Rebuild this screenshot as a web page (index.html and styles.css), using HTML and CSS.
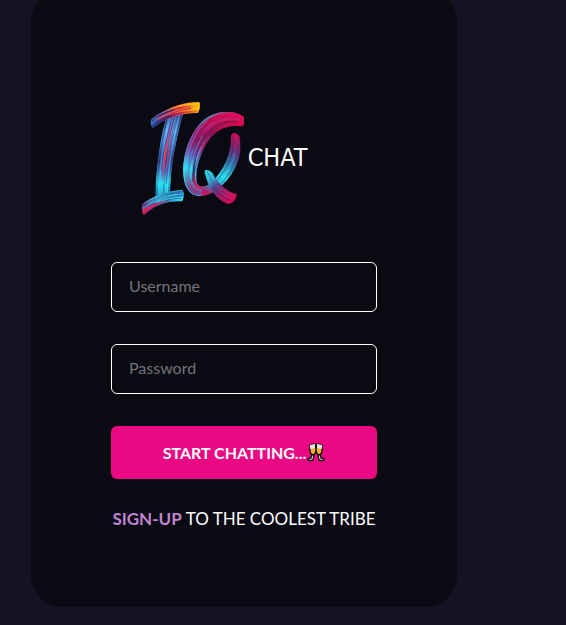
FILE: index.html
```html
<!DOCTYPE html>
<html lang="en">
<head>
<meta charset="utf-8">
<meta name="viewport" content="width=device-width, initial-scale=1">
<title>IQ Chat</title>
<link rel="stylesheet" href="styles.css">
</head>
<body>
<main class="page">
  <form class="card">
    <div class="brand">
      <svg class="logo" viewBox="0 0 570 405" role="img" aria-label="IQ Chat">
        <defs>
          <linearGradient id="bar" gradientUnits="userSpaceOnUse" x1="62" y1="105" x2="210" y2="50">
            <stop offset="0" stop-color="#2879c8"/><stop offset=".25" stop-color="#503079"/><stop offset=".5" stop-color="#e4314f"/><stop offset=".75" stop-color="#ff7a18"/><stop offset="1" stop-color="#ffc107"/>
          </linearGradient>
          <linearGradient id="barLight" gradientUnits="userSpaceOnUse" x1="62" y1="90" x2="210" y2="50">
            <stop offset="0" stop-color="#4c65b8"/><stop offset=".3" stop-color="#b17394"/><stop offset=".55" stop-color="#ff8b1e"/><stop offset="1" stop-color="#ffd019"/>
          </linearGradient>
          <linearGradient id="barDark" gradientUnits="userSpaceOnUse" x1="62" y1="105" x2="210" y2="50">
            <stop offset="0" stop-color="#2b2e83"/><stop offset=".35" stop-color="#30265f"/><stop offset=".65" stop-color="#c52a45"/><stop offset="1" stop-color="#f5a013"/>
          </linearGradient>
          <linearGradient id="stemBlue" gradientUnits="userSpaceOnUse" x1="0" y1="75" x2="0" y2="310">
            <stop offset="0" stop-color="#3957aa"/><stop offset=".2" stop-color="#5eb4ee"/><stop offset=".5" stop-color="#3366ad"/><stop offset=".7" stop-color="#4579cc"/><stop offset=".88" stop-color="#20e6f2"/><stop offset="1" stop-color="#2abbe0"/>
          </linearGradient>
          <linearGradient id="stemDark" gradientUnits="userSpaceOnUse" x1="0" y1="75" x2="0" y2="310">
            <stop offset="0" stop-color="#2a3274"/><stop offset=".35" stop-color="#3b6fc0"/><stop offset=".6" stop-color="#312c6c"/><stop offset=".85" stop-color="#25bcd6"/><stop offset="1" stop-color="#286ca8"/>
          </linearGradient>
          <linearGradient id="stemRed" gradientUnits="userSpaceOnUse" x1="0" y1="75" x2="0" y2="310">
            <stop offset="0" stop-color="#4a79cc"/><stop offset=".25" stop-color="#9a52a0"/><stop offset=".5" stop-color="#f33859"/><stop offset=".72" stop-color="#91519f"/><stop offset=".88" stop-color="#28dcee"/><stop offset="1" stop-color="#32b9dc"/>
          </linearGradient>
          <linearGradient id="foot" gradientUnits="userSpaceOnUse" x1="36" y1="360" x2="160" y2="315">
            <stop offset="0" stop-color="#b71b67"/><stop offset=".35" stop-color="#5b3b8d"/><stop offset=".65" stop-color="#299fd0"/><stop offset="1" stop-color="#36eaf5"/>
          </linearGradient>
          <linearGradient id="footBlue" gradientUnits="userSpaceOnUse" x1="36" y1="345" x2="160" y2="310">
            <stop offset="0" stop-color="#4d6db8"/><stop offset=".4" stop-color="#2bc7df"/><stop offset=".7" stop-color="#217da9"/><stop offset="1" stop-color="#3769bd"/>
          </linearGradient>
          <linearGradient id="footRed" gradientUnits="userSpaceOnUse" x1="36" y1="365" x2="130" y2="325">
            <stop offset="0" stop-color="#f01e4e"/><stop offset=".5" stop-color="#cc2b67"/><stop offset="1" stop-color="#277fc3"/>
          </linearGradient>
          <linearGradient id="ringOuter" gradientUnits="userSpaceOnUse" x1="320" y1="70" x2="180" y2="315">
            <stop offset="0" stop-color="#bd1769"/><stop offset=".18" stop-color="#3e9fc4"/><stop offset=".4" stop-color="#7b408f"/><stop offset=".6" stop-color="#6b6bce"/><stop offset=".8" stop-color="#2aeff7"/><stop offset="1" stop-color="#329ed4"/>
          </linearGradient>
          <linearGradient id="ringRed" gradientUnits="userSpaceOnUse" x1="330" y1="85" x2="195" y2="315">
            <stop offset="0" stop-color="#e60c56"/><stop offset=".3" stop-color="#aa0c57"/><stop offset=".5" stop-color="#8b1b69"/><stop offset=".62" stop-color="#6847a6"/><stop offset=".78" stop-color="#2fdff0"/><stop offset="1" stop-color="#8a2a83"/>
          </linearGradient>
          <linearGradient id="ringPurple" gradientUnits="userSpaceOnUse" x1="330" y1="85" x2="200" y2="315">
            <stop offset="0" stop-color="#bb1455"/><stop offset=".25" stop-color="#a63391"/><stop offset=".45" stop-color="#681b64"/><stop offset=".63" stop-color="#507fda"/><stop offset=".82" stop-color="#2896cd"/><stop offset="1" stop-color="#b11661"/>
          </linearGradient>
          <linearGradient id="ringInner" gradientUnits="userSpaceOnUse" x1="330" y1="105" x2="215" y2="300">
            <stop offset="0" stop-color="#d70850"/><stop offset=".3" stop-color="#7d184f"/><stop offset=".5" stop-color="#9f3f88"/><stop offset=".65" stop-color="#50a0e3"/><stop offset=".82" stop-color="#32437f"/><stop offset="1" stop-color="#e51555"/>
          </linearGradient>
          <linearGradient id="side" gradientUnits="userSpaceOnUse" x1="318" y1="130" x2="225" y2="305">
            <stop offset="0" stop-color="#d60e59"/><stop offset=".22" stop-color="#702b75"/><stop offset=".42" stop-color="#3268ac"/><stop offset=".67" stop-color="#29e6ef"/><stop offset=".86" stop-color="#3192ce"/><stop offset="1" stop-color="#c21763"/>
          </linearGradient>
          <linearGradient id="sideDark" gradientUnits="userSpaceOnUse" x1="318" y1="130" x2="225" y2="305">
            <stop offset="0" stop-color="#b10b55"/><stop offset=".28" stop-color="#552962"/><stop offset=".5" stop-color="#217490"/><stop offset=".8" stop-color="#2aa8cd"/><stop offset="1" stop-color="#7a2f85"/>
          </linearGradient>
          <linearGradient id="tail" gradientUnits="userSpaceOnUse" x1="225" y1="240" x2="305" y2="335">
            <stop offset="0" stop-color="#20e9ef"/><stop offset=".25" stop-color="#35b4d9"/><stop offset=".48" stop-color="#554089"/><stop offset=".7" stop-color="#9d1c65"/><stop offset="1" stop-color="#d90c59"/>
          </linearGradient>
          <clipPath id="barShape"><path d="M62 92Q65 80 130 50C160 38 190 35 208 37Q213 52 204 69C160 68 110 82 68 114Q60 105 62 92Z"/></clipPath>
          <clipPath id="stemShape"><path d="M108 84Q130 70 160 70C140 140 121 230 120 312L76 318C78 230 90 150 108 84Z"/></clipPath>
          <clipPath id="footShape"><path d="M36 345C60 320 110 302 157 300Q166 312 157 334C110 332 75 345 42 376Q35 370 36 345Z"/></clipPath>
          <clipPath id="ringShape"><path d="M341 80C315 60 275 62 245 75C190 100 158 180 160 250C162 300 185 320 215 318Q240 314 250 304L235 285C215 293 203 292 200 275C195 240 210 185 240 145C265 115 300 102 338 109Q345 98 341 80Z"/></clipPath>
          <clipPath id="sideShape"><path d="M303 136Q312 121 328 138C341 190 318 255 262 298Q240 316 214 318L218 291Q230 290 243 279C285 240 305 185 303 136Z"/></clipPath>
          <clipPath id="tailShape"><path d="M223 242Q236 236 248 250C262 280 290 305 321 313C318 328 310 340 295 342C260 330 234 296 223 242Z"/></clipPath>
        </defs>
        <g fill="none" stroke-linecap="round">
          <g clip-path="url(#stemShape)">
            <path fill="url(#stemBlue)" d="M60 60H170V325H60Z"/>
            <path stroke="url(#stemDark)" stroke-width="5" d="M111 84C94 155 82 235 80 315M133 74C114 145 103 230 100 315M155 72C135 145 119 232 116 315"/>
            <path stroke="url(#stemRed)" stroke-width="7" d="M130 74C111 145 98 230 94 315"/>
            <path stroke="url(#stemRed)" stroke-width="3" d="M139 74C121 145 108 230 105 315"/>
            <path stroke="#7bd3fa" stroke-opacity=".6" stroke-width="2" d="M121 80C103 150 91 220 89 285M149 76C128 150 114 230 111 310"/>
            <path stroke="#24336d" stroke-opacity=".7" stroke-width="2" d="M126 80C108 150 96 200 94 240M144 76C124 150 112 220 109 280"/>
          </g>
          <g clip-path="url(#barShape)">
            <path fill="url(#bar)" d="M50 25H220V125H50Z"/>
            <path stroke="url(#barDark)" stroke-width="5" d="M58 88C95 63 140 52 180 49M64 112C105 77 155 63 210 65"/>
            <path stroke="url(#barLight)" stroke-width="5" d="M60 90C95 62 150 43 210 40M72 91C115 67 155 57 207 55"/>
            <path stroke="#1f225c" stroke-width="3" stroke-opacity=".7" d="M67 92C85 75 110 66 129 61"/>
            <path stroke="#cb2351" stroke-width="4" d="M87 88C118 70 155 59 182 55"/>
          </g>
          <g clip-path="url(#footShape)">
            <path fill="url(#foot)" d="M25 290H175V385H25Z"/>
            <path stroke="url(#footBlue)" stroke-width="6" d="M34 345C70 320 115 308 162 304M37 355C75 331 118 320 162 316"/>
            <path stroke="url(#footRed)" stroke-width="7" d="M36 367C64 345 87 336 118 330"/>
            <path stroke="#173e7b" stroke-width="2" d="M36 348C72 326 115 313 158 309M60 346C90 332 120 326 155 324"/>
            <path stroke="#5ae7ff" stroke-width="2" d="M55 339C85 323 112 317 140 314M80 337Q115 324 158 320"/>
          </g>
          <g clip-path="url(#ringShape)">
            <path fill="url(#ringRed)" d="M145 50H350V330H145Z"/>
            <path stroke="url(#ringOuter)" stroke-width="10" d="M341 80C315 60 275 62 245 75C190 100 158 180 160 250C162 300 185 320 215 318"/>
            <path stroke="url(#ringRed)" stroke-width="8" d="M341 86C312 68 273 73 244 89C194 117 165 192 168 255C170 298 191 314 219 312"/>
            <path stroke="url(#ringPurple)" stroke-width="4" d="M341 91C309 77 271 83 243 103C198 134 173 204 176 260C178 297 197 309 223 306"/>
            <path stroke="url(#ringRed)" stroke-width="8" d="M341 97C306 85 269 94 242 117C202 151 180 216 184 265C187 295 203 303 227 300"/>
            <path stroke="url(#ringInner)" stroke-width="7" d="M341 102C303 94 267 104 241 131C206 168 188 228 192 270C195 294 209 298 231 294"/>
            <path stroke="url(#ringInner)" stroke-width="3" d="M341 108C300 102 265 115 240 145C210 185 195 240 200 275C203 292 215 292 235 288"/>
            <path stroke="#302453" stroke-opacity=".8" stroke-width="3" d="M322 95C280 91 250 105 226 140C200 180 185 230 189 275"/>
            <path stroke="#70c8ef" stroke-opacity=".7" stroke-width="2" d="M231 93C195 123 177 170 170 220M217 138C193 178 181 225 181 266"/>
            <path stroke="#d9689b" stroke-opacity=".4" stroke-width="2" d="M230 121C260 90 290 82 330 88"/>
          </g>
          <g clip-path="url(#sideShape)">
            <path fill="url(#side)" d="M200 120H350V330H200Z"/>
            <path stroke="url(#sideDark)" stroke-width="4" d="M309 130C315 190 290 245 245 287Q230 299 211 302M326 130C334 192 310 250 257 296"/>
            <path stroke="#3bc5da" stroke-opacity=".7" stroke-width="2" d="M315 190C304 232 280 264 246 292"/>
          </g>
          <g clip-path="url(#tailShape)">
            <path fill="url(#tail)" d="M215 230H330V350H215Z"/>
            <path stroke="#2d5da2" stroke-opacity=".6" stroke-width="3" d="M232 244C245 278 261 301 286 317"/>
            <path stroke="#ff3f78" stroke-opacity=".5" stroke-width="2" d="M262 286Q283 310 315 320M266 304Q282 320 304 326"/>
            <path stroke="#2f1742" stroke-opacity=".4" stroke-width="3" d="M249 290Q270 318 300 330"/>
          </g>
        </g>
        <text class="wordmark" x="353" y="227">CHAT</text>
      </svg>
    </div>
    <input class="field" type="text" placeholder="Username" aria-label="Username">
    <input class="field" type="password" placeholder="Password" aria-label="Password">
    <button class="submit" type="submit">START CHATTING...<svg class="cheers" viewBox="0 0 18 20" aria-hidden="true">
        <g stroke="#151515" stroke-width="1.4" stroke-linejoin="round">
          <path fill="#eeeaf0" d="M5 10L4 15Q1 15 1 17Q3 18 6 17L7 11ZM13 10L14 15Q17 15 17 17Q15 18 12 17L11 11Z"/>
          <path fill="#f4b52c" d="M3 2L8 1L9 6Q9 11 6 12Q3 11 3 8ZM15 2L10 1L9 6Q9 11 12 12Q15 11 15 8Z"/>
        </g>
        <path fill="#e9e4dd" d="M3 2L8 1L8 5L3 6ZM15 2L10 1L10 5L15 6Z"/>
      </svg></button>
    <p class="signup"><a href="#signup">SIGN-UP</a> TO THE COOLEST TRIBE</p>
  </form>
</main>
</body>
</html>
```
FILE: styles.css
```css
* { box-sizing: border-box; }

body {
  margin: 0;
  background: #131324;
  color: #fff;
  font-family: Lato, sans-serif;
  font-size: 16px;
}

.page {
  display: flex;
  flex-direction: column;
  justify-content: flex-end;
  height: 100vh;
  padding: 0 109px 18px 31px;
  overflow: hidden;
}

.card {
  display: flex;
  flex-direction: column;
  flex-shrink: 0;
  gap: 32px;
  padding: 80px;
  border-radius: 32px;
  background: #0a0a13;
}

.brand {
  display: flex;
  align-items: flex-end;
  height: 160px;
  padding-bottom: 5px;
}

.logo {
  display: block;
  flex: none;
  width: 190px;
  margin-left: 19px;
}

.wordmark {
  fill: #fff;
  font-family: "DejaVu Sans Condensed", "Open Sans", sans-serif;
  font-size: 75px;
}

.field {
  width: 100%;
  height: 50px;
  padding: 0 17px 3px;
  border: 1px solid #fff;
  border-radius: 6px;
  background: transparent;
  color: #fff;
  font: inherit;
}

.field::placeholder { color: #757575; opacity: 1; }

.submit {
  display: flex;
  align-items: center;
  justify-content: center;
  height: 53px;
  padding: 0;
  border: 0;
  border-radius: 6px;
  background: #eb0883;
  color: #fff;
  font: inherit;
  font-weight: 700;
  cursor: pointer;
}

.cheers { width: 18px; height: 20px; margin-left: 1px; }

.signup {
  display: flex;
  justify-content: center;
  gap: 4px;
  margin: 0;
  font-size: 17px;
  line-height: 16px;
  white-space: nowrap;
}

.signup a {
  color: #c084d0;
  font-weight: 700;
  text-decoration: none;
}
```
